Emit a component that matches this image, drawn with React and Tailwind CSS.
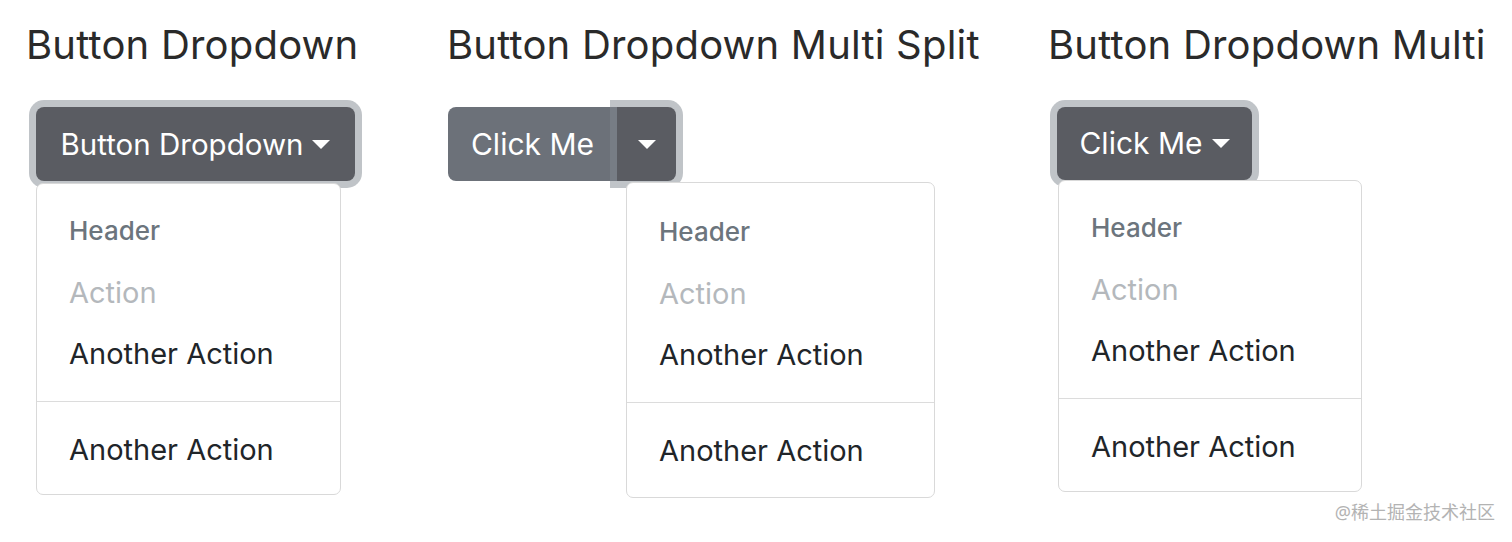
import React from 'react';

const font = { fontFamily: 'Inter, "Noto Sans", "Noto Sans CJK SC", sans-serif' };

const Caret = ({ className = '' }) => (
    <span className={`inline-block w-0 h-0 border-l-[9px] border-r-[9px] border-t-[9px] border-l-transparent border-r-transparent border-t-white ${className}`} />
);

const Menu = ({ className = '' }) => (
    <div className={`relative z-10 bg-white border border-[#d9d9d9] rounded-[7px] pt-[15px] pb-[14px] ${className}`}>
        <div className="h-[63px] flex items-center px-[32px] text-[26px] font-medium text-[#6c757d]">Header</div>
        <div className="h-[61px] flex items-center px-[32px] text-[29px] text-[#b4b8bc]">Action</div>
        <div className="h-[61px] flex items-center px-[32px] text-[29px] text-[#212529]">Another Action</div>
        <div className="my-[17px] h-px bg-[#dcdcdc]" />
        <div className="h-[61px] flex items-center px-[32px] text-[29px] text-[#212529]">Another Action</div>
    </div>
);

const Heading = ({ children }) => (
    <h2 className="mt-[21px] text-[40px] leading-[48px] text-[#2a2a2a] whitespace-nowrap tracking-[0.2px]">{children}</h2>
);

export default function App() {
    return (
        <div className="relative h-[542px] w-[1512px] bg-white overflow-hidden" style={font}>
            <div className="flex pl-[26px]">
                {/* Button Dropdown */}
                <div className="w-[421px] shrink-0">
                    <Heading>Button Dropdown</Heading>
                    <div className="mt-[38px] pl-[10px]">
                        <button className="h-[74px] w-[319px] flex items-center justify-center rounded-[8px] bg-[#5a5c62] text-white text-[29.5px] shadow-[0_0_0_7px_rgba(130,138,145,0.5)]">
                            Button Dropdown
                            <Caret className="ml-[9px]" />
                        </button>
                        <Menu className="mt-[2px] w-[305px]" />
                    </div>
                </div>

                {/* Button Dropdown Multi Split */}
                <div className="w-[601px] shrink-0">
                    <Heading>Button Dropdown Multi Split</Heading>
                    <div className="mt-[38px] pl-px">
                        <div className="flex">
                            <button className="h-[74px] w-[169px] flex items-center justify-center rounded-l-[8px] bg-[#6c7179] text-white text-[30px]">
                                Click Me
                            </button>
                            <button className="relative z-[1] h-[74px] w-[59px] flex items-center justify-center rounded-r-[8px] bg-[#5a5c62] shadow-[0_0_0_7px_rgba(130,138,145,0.5)]">
                                <Caret />
                            </button>
                        </div>
                        <Menu className="mt-[1px] ml-[178px] w-[309px] pt-[17px] pb-[16px]" />
                    </div>
                </div>

                {/* Button Dropdown Multi */}
                <div className="shrink-0">
                    <Heading>Button Dropdown Multi</Heading>
                    <div className="mt-[38px] pl-[9px]">
                        <button className="h-[73px] w-[195px] flex items-center justify-center rounded-[8px] bg-[#5a5c62] text-white text-[30px] shadow-[0_0_0_7px_rgba(130,138,145,0.5)]">
                            Click Me
                            <Caret className="ml-[9px]" />
                        </button>
                        <Menu className="mt-0 ml-px w-[304px]" />
                    </div>
                </div>
            </div>

            <div className="absolute right-[17px] bottom-[16px] text-[18px] text-[#b3b3b3]" style={{ fontFamily: '"Noto Sans", "Noto Sans CJK SC", sans-serif' }}>
                @稀土掘金技术社区
            </div>
        </div>
    );
}
